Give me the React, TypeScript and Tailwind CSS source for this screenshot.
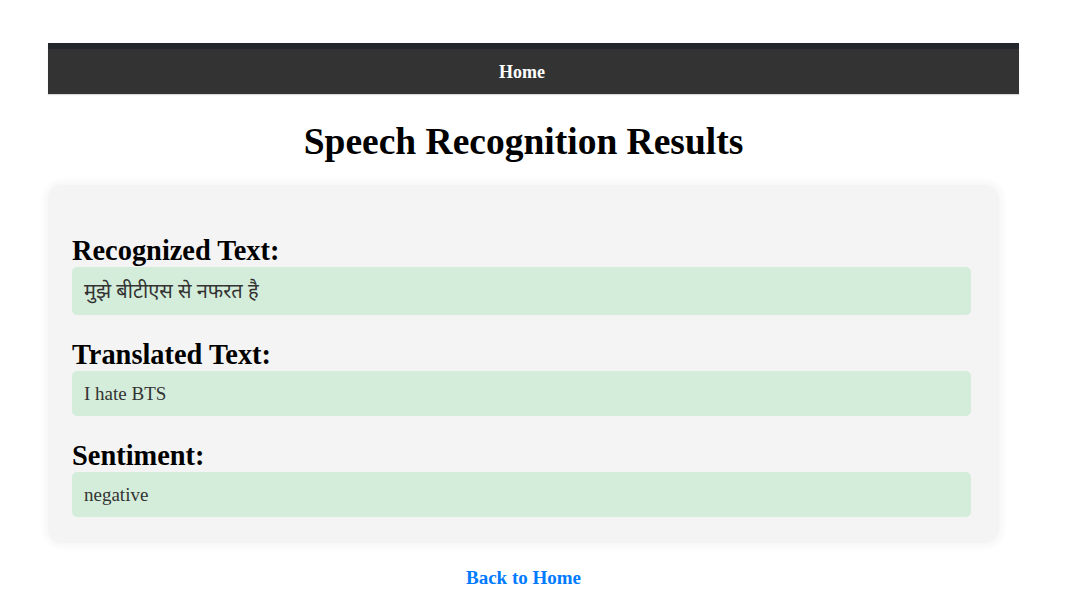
export default function App() {
  const results = [
    { label: 'Recognized Text:', value: 'मुझे बीटीएस से नफरत है', hindi: true },
    { label: 'Translated Text:', value: 'I hate BTS', hindi: false },
    { label: 'Sentiment:', value: 'negative', hindi: false },
  ]

  return (
    <div className="min-h-screen bg-white px-[48px] pt-[43px] font-['Liberation_Serif',serif] text-black">
      {/* Top nav */}
      <nav className="flex h-[51px] items-center justify-center border-t-[6px] border-t-[#23272b] bg-[#333333] pr-[23px] pt-[1px] shadow-[0_1px_1px_rgba(0,0,0,0.15)]">
        <a className="text-[18px] font-bold text-white">Home</a>
      </nav>

      <main className="w-[951px]">
        <h1 className="mt-[26px] text-center text-[37.5px] font-bold leading-[44px]">
          Speech Recognition Results
        </h1>

        <div className="mt-[21px] rounded-[14px] bg-[#f4f4f4] pb-[26px] pl-6 pr-[28px] pt-[26px] shadow-[0_0_6px_4px_rgba(0,0,0,0.035)]">
          {results.map((r) => (
            <section key={r.label}>
              <h2 className="mt-[23px] text-[28.4px] font-bold leading-[33px]">{r.label}</h2>
              <div
                className={
                  r.hindi
                    ? "rounded-[5px] bg-[#d4edda] px-3 py-[11px] font-['Noto_Sans','Liberation_Serif',sans-serif] text-[20px] leading-[26px] text-[#333]"
                    : 'rounded-[5px] bg-[#d4edda] px-3 py-[11px] text-[19px] leading-[23px] text-[#333]'
                }
              >
                {r.value}
              </div>
            </section>
          ))}
        </div>

        <div className="mt-[24px] text-center">
          <a className="text-[19px] font-bold leading-[22px] text-[#007bff]">Back to Home</a>
        </div>
      </main>
    </div>
  )
}
